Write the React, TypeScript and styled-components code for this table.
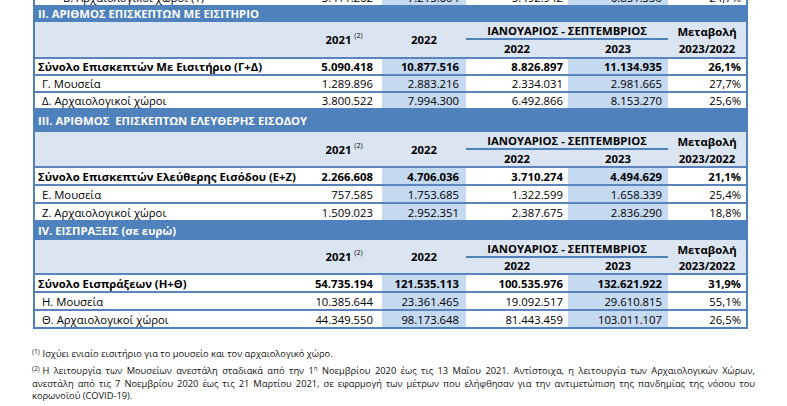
import React from 'react';
import styled, { createGlobalStyle } from 'styled-components';

const Global = createGlobalStyle`
  html, body { margin: 0; padding: 0; background: #fff; }
  body { font-family: "Open Sans", "Noto Sans", sans-serif; color: #000; }
`;

const COLS = '271px 76px 84px 102px 100px 78px';
const BLUE = '#4f81bd';
const LINE = '#5b84bf';
const PALE = '#dbe5f1';
const LIGHT = '#c5d9f1';

const Page = styled.div`
  width: 787px;
  height: 406px;
  overflow: hidden;
`;

const Table = styled.div`
  margin: -12px 0 0 33px;
  width: 715px;
  box-sizing: border-box;
  border-left: 2px solid ${BLUE};
  border-right: 2px solid ${BLUE};
  border-bottom: 2px solid ${BLUE};
  font-size: 11.3px;
  font-stretch: 92%;
`;

const SectionTitle = styled.div<{ $h: number }>`
  height: ${(p) => p.$h}px;
  background: ${BLUE};
  color: #fff;
  font-weight: 700;
  display: flex;
  align-items: center;
  padding-left: 3px;
  white-space: pre;
`;

const HeaderGrid = styled.div<{ $h: number }>`
  display: grid;
  grid-template-columns: ${COLS};
  grid-template-rows: 18px 1fr;
  height: ${(p) => p.$h}px;
  background: ${PALE};
  font-weight: 700;
`;

const HeadCell = styled.div<{ $col: string; $row: string; $line?: boolean }>`
  grid-column: ${(p) => p.$col};
  grid-row: ${(p) => p.$row};
  display: flex;
  align-items: center;
  justify-content: center;
  box-sizing: border-box;
  ${(p) => (p.$line ? `border-bottom: 2px solid ${BLUE};` : '')}
`;

const Sup = styled.span`
  font-size: 7px;
  font-weight: 400;
  position: relative;
  top: -4px;
  margin-left: 3px;
`;

const Row = styled.div<{ $h: number }>`
  display: grid;
  grid-template-columns: ${COLS};
  height: ${(p) => p.$h}px;
  box-sizing: border-box;
  border-top: 2px solid ${LINE};
`;

const Label = styled.div<{ $bold: boolean; $indent: number }>`
  background: #fff;
  font-weight: ${(p) => (p.$bold ? 700 : 400)};
  padding-left: ${(p) => p.$indent}px;
  display: flex;
  align-items: center;
  white-space: nowrap;
`;

const Value = styled.div<{ $bold: boolean; $light: boolean; $pad: number }>`
  background: ${(p) => (p.$light ? LIGHT : '#fff')};
  font-weight: ${(p) => (p.$bold ? 700 : 400)};
  padding-right: ${(p) => p.$pad}px;
  display: flex;
  align-items: center;
  justify-content: flex-end;
  white-space: nowrap;
`;

const Notes = styled.div`
  margin: 19px 0 0 32px;
  width: 723px;
  font-size: 9.3px;
  line-height: 12px;
  color: #111;
`;

const Para = styled.div<{ $gap: number }>`
  margin-top: ${(p) => p.$gap}px;
`;

const JLine = styled.div`
  text-align: justify;
  text-align-last: justify;
`;

const NoteSup = styled.span`
  font-size: 6.5px;
  position: relative;
  top: -3px;
  margin-right: 3px;
`;

const OrdSup = styled.sup`
  font-size: 6px;
  line-height: 0;
`;

type DataRowT = { label: string; bold: boolean; values: string[]; indent: number };

const PADS = [9, 7, 5, 6, 5];
const LIGHTS = [false, true, false, true, false];

function DataRow({ r, h }: { r: DataRowT; h: number }) {
  return (
    <Row $h={h}>
      <Label $bold={r.bold} $indent={r.indent}>{r.label}</Label>
      {r.values.map((v, i) => (
        <Value key={i} $bold={r.bold} $light={LIGHTS[i]} $pad={PADS[i]}>
          {v}
        </Value>
      ))}
    </Row>
  );
}

function Header({ h }: { h: number }) {
  return (
    <HeaderGrid $h={h}>
      <HeadCell $col="1" $row="1 / 3" />
      <HeadCell $col="2" $row="1 / 3">
        2021<Sup>(2)</Sup>
      </HeadCell>
      <HeadCell $col="3" $row="1 / 3">2022</HeadCell>
      <HeadCell $col="4 / 6" $row="1" $line>
        ΙΑΝΟΥΑΡΙΟΣ - ΣΕΠΤΕΜΒΡΙΟΣ
      </HeadCell>
      <HeadCell $col="6" $row="1">Μεταβολή</HeadCell>
      <HeadCell $col="4" $row="2">2022</HeadCell>
      <HeadCell $col="5" $row="2">2023</HeadCell>
      <HeadCell $col="6" $row="2">2023/2022</HeadCell>
    </HeaderGrid>
  );
}

type SectionT = { title: string; titleH: number; headH: number; rowH: number; rows: DataRowT[] };

const sections: SectionT[] = [
  {
    title: 'II. ΑΡΙΘΜΟΣ ΕΠΙΣΚΕΠΤΩΝ ΜΕ ΕΙΣΙΤΗΡΙΟ',
    titleH: 17,
    headH: 35,
    rowH: 17,
    rows: [
      { label: 'Σύνολο Επισκεπτών Με Εισιτήριο (Γ+Δ)', bold: true, indent: 3, values: ['5.090.418', '10.877.516', '8.826.897', '11.134.935', '26,1%'] },
      { label: 'Γ. Μουσεία', bold: false, indent: 7, values: ['1.289.896', '2.883.216', '2.334.031', '2.981.665', '27,7%'] },
      { label: 'Δ. Αρχαιολογικοί χώροι', bold: false, indent: 7, values: ['3.800.522', '7.994.300', '6.492.866', '8.153.270', '25,6%'] },
    ],
  },
  {
    title: 'III. ΑΡΙΘΜΟΣ  ΕΠΙΣΚΕΠΤΩΝ ΕΛΕΥΘΕΡΗΣ ΕΙΣΟΔΟΥ',
    titleH: 24,
    headH: 34,
    rowH: 18,
    rows: [
      { label: 'Σύνολο Επισκεπτών Ελεύθερης Εισόδου (Ε+Ζ)', bold: true, indent: 3, values: ['2.266.608', '4.706.036', '3.710.274', '4.494.629', '21,1%'] },
      { label: 'Ε. Μουσεία', bold: false, indent: 7, values: ['757.585', '1.753.685', '1.322.599', '1.658.339', '25,4%'] },
      { label: 'Ζ. Αρχαιολογικοί χώροι', bold: false, indent: 7, values: ['1.509.023', '2.952.351', '2.387.675', '2.836.290', '18,8%'] },
    ],
  },
  {
    title: 'IV. ΕΙΣΠΡΑΞΕΙΣ (σε ευρώ)',
    titleH: 20,
    headH: 33,
    rowH: 18,
    rows: [
      { label: 'Σύνολο Εισπράξεων (Η+Θ)', bold: true, indent: 3, values: ['54.735.194', '121.535.113', '100.535.976', '132.621.922', '31,9%'] },
      { label: 'Η. Μουσεία', bold: false, indent: 7, values: ['10.385.644', '23.361.465', '19.092.517', '29.610.815', '55,1%'] },
      { label: 'Θ. Αρχαιολογικοί χώροι', bold: false, indent: 7, values: ['44.349.550', '98.173.648', '81.443.459', '103.011.107', '26,5%'] },
    ],
  },
];

const remnant: DataRowT = {
  label: 'Β. Αρχαιολογικοί χώροι (1)',
  bold: false,
  indent: 28,
  values: ['3.411.262', '7.215.604', '5.492.942', '6.851.350', '24,7%'],
};

export default function App() {
  return (
    <Page>
      <Global />
      <Table>
        <DataRow r={remnant} h={17} />
        {sections.map((s) => (
          <React.Fragment key={s.title}>
            <SectionTitle $h={s.titleH}>{s.title}</SectionTitle>
            <Header h={s.headH} />
            {s.rows.map((r) => (
              <DataRow key={r.label} r={r} h={s.rowH} />
            ))}
          </React.Fragment>
        ))}
      </Table>
      <Notes>
        <Para $gap={0}>
          <NoteSup>(1)</NoteSup>Ισχύει ενιαίο εισιτήριο για το μουσείο και τον αρχαιολογικό χώρο.
        </Para>
        <Para $gap={4}>
          <JLine>
            <NoteSup>(2)</NoteSup>Η λειτουργία των Μουσείων ανεστάλη σταδιακά από την 1<OrdSup>η</OrdSup> Νοεμβρίου 2020 έως τις 13 Μαΐου 2021. Αντίστοιχα, η λειτουργία των Αρχαιολογικών Χώρων,
          </JLine>
          <JLine>
            ανεστάλη από τις 7 Νοεμβρίου 2020 έως τις 21 Μαρτίου 2021, σε εφαρμογή των μέτρων που ελήφθησαν για την αντιμετώπιση της πανδημίας της νόσου του
          </JLine>
          <div>κορωνοϊού (COVID-19).</div>
        </Para>
      </Notes>
    </Page>
  );
}
